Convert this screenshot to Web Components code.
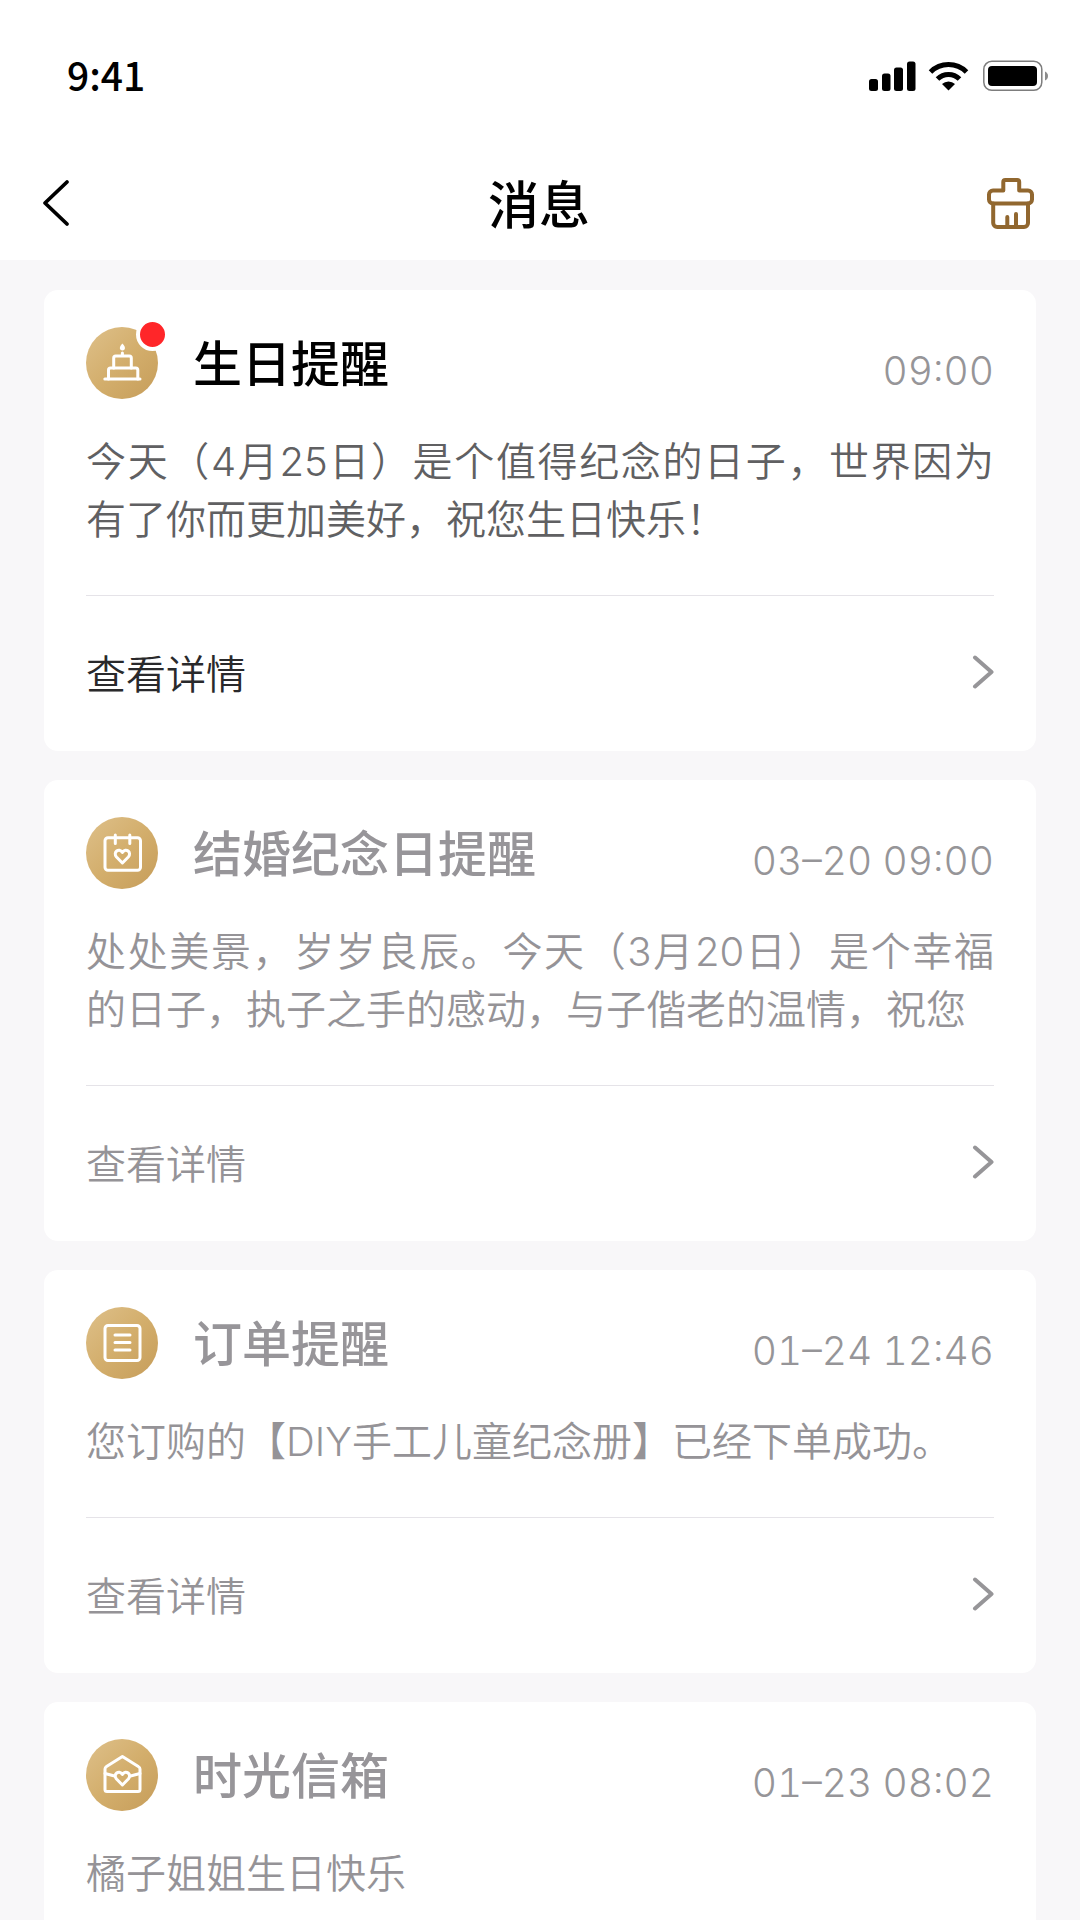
<!DOCTYPE html>
<html lang="zh-CN">
<head>
<meta charset="utf-8">
<meta name="viewport" content="width=device-width, initial-scale=1">
<title>消息</title>
<style>
  html, body { margin: 0; height: 100%; }
  body {
    background: #f8f7f9;
    color: #000;
    font-family: "Noto Sans CJK SC", sans-serif;
  }
</style>
</head>
<body>
<message-app>
  <status-bar slot="top">9:41</status-bar>
  <nav-bar slot="top">消息</nav-bar>
  <message-card unread icon="cake" time="09:00" href="#birthday">
    <span slot="title">生日提醒</span>
    今天（4月25日）是个值得纪念的日子，世界因为有了你而更加美好，祝您生日快乐！
  </message-card>
  <message-card icon="calendar" time="03–20 09:00" href="#anniversary">
    <span slot="title">结婚纪念日提醒</span>
    处处美景，岁岁良辰。今天（3月20日）是个幸福的日子，执子之手的感动，与子偕老的温情，祝您
  </message-card>
  <message-card icon="order" time="01–24 12:46" href="#order">
    <span slot="title">订单提醒</span>
    您订购的【DIY手工儿童纪念册】已经下单成功。
  </message-card>
  <message-card icon="mail" time="01–23 08:02">
    <span slot="title">时光信箱</span>
    橘子姐姐生日快乐
  </message-card>
</message-app>

<script>
const attach = (el, html) => { el.attachShadow({ mode: "open" }).innerHTML = html; };

customElements.define("message-app", class extends HTMLElement {
  constructor() {
    super();
    attach(this, `
      <style>
        :host { display: flex; flex-direction: column; height: 100vh; }
        header { flex: none; background: #fff; }
        main {
          flex: 1; min-height: 0; overflow-y: auto; scrollbar-width: none;
          display: flex; flex-direction: column; gap: 29px;
          padding: 30px 44px; box-sizing: border-box;
        }
      </style>
      <header><slot name="top"></slot></header>
      <main><slot></slot></main>`);
  }
});

customElements.define("status-bar", class extends HTMLElement {
  constructor() {
    super();
    attach(this, `
      <style>
        :host {
          display: flex; align-items: center; justify-content: space-between;
          height: 152px; padding: 0 32px 0 67px;
          font-size: 39px; font-weight: 500; line-height: 60px;
        }
        span { padding-bottom: 4px; }
        svg { display: block; }
      </style>
      <span><slot></slot></span>
      <svg width="179" height="32" viewBox="0 0 179 32" aria-hidden="true">
        <rect x="0" y="19" width="9" height="12" rx="2.5"/>
        <rect x="13" y="13.5" width="8.5" height="17.5" rx="2.5"/>
        <rect x="25" y="7.5" width="9" height="23.5" rx="2.5"/>
        <rect x="38" y="1.5" width="8.5" height="29.5" rx="2.5"/>
        <g fill="none" stroke="#000" stroke-width="5">
          <path d="M61.5 12A25.5 25.5 0 0 1 97.5 12"/>
          <path d="M68.5 19A15.5 15.5 0 0 1 90.5 19"/>
        </g>
        <path d="M79.5 30.5L73 24A9.5 9.5 0 0 1 86 24Z"/>
        <rect x="114.8" y="1.3" width="58" height="29" rx="8" fill="none" stroke="#7d7d7d" stroke-width="1.5"/>
        <rect x="119" y="6" width="49" height="20" rx="4"/>
        <path d="M176 11.5Q179 13 179 16T176 20.5Z" fill="#8c8c8c"/>
      </svg>`);
  }
});

customElements.define("nav-bar", class extends HTMLElement {
  constructor() {
    super();
    attach(this, `
      <style>
        :host {
          display: flex; align-items: center; justify-content: space-between;
          height: 102px; padding: 0 44px 6px 42px;
        }
        h1 { margin: 0; padding-bottom: 2px; font-size: 51px; font-weight: 500; line-height: 72px; }
        button {
          display: flex; align-items: center; width: 64px; height: 64px;
          margin: 0; padding: 0; border: 0; background: none; cursor: pointer;
        }
        .clear { justify-content: flex-end; }
        svg { display: block; fill: none; stroke-linecap: round; stroke-linejoin: round; }
      </style>
      <button class="back" type="button" aria-label="返回">
        <svg width="28" height="48" viewBox="0 0 28 48" stroke="#000" stroke-width="3.8"><path d="M25 3L3 24L25 45"/></svg>
      </button>
      <h1><slot></slot></h1>
      <button class="clear" type="button" aria-label="清除未读">
        <svg width="50" height="53" viewBox="0 0 50 53" stroke="#91672f" stroke-width="4">
          <path d="M17.3 13.5V5a2 2 0 0 1 2-2H31.2a2 2 0 0 1 2 2V13.5H42a4 4 0 0 1 4 4V22.5a4 4 0 0 1-4 4H7a4 4 0 0 1-4-4V17.5a4 4 0 0 1 4-4Z"/>
          <path d="M7.2 26.5V46a4 4 0 0 0 4 4H38a4 4 0 0 0 4-4V26.5"/>
          <path d="M21.3 40V49M30 37V49"/>
        </svg>
      </button>`);
  }
});

const HEART = "M36.4 46L30.5 40C26.5 35.5 33 30 36.4 35.5C39.8 30 46.3 35.5 42.3 40Z";
const ICONS = {
  cake: `<path d="M18.8 52H54"/>
    <path d="M22.5 52V43a2 2 0 0 1 2-2H49.8a2 2 0 0 1 2 2V52"/>
    <path d="M27.7 41V31a2 2 0 0 1 2-2H43.3a2 2 0 0 1 2 2V41M36.4 29V26"/>
    <path d="M36.4 16.5C40.5 20.5 39 23.5 36.4 23.5S32.3 20.5 36.4 16.5Z" fill="#fff" stroke="none"/>`,
  calendar: `<rect x="19" y="20.8" width="35.5" height="32.5" rx="3"/>
    <path d="M29.3 18V26.5M43.8 18V26.5"/>
    <path d="${HEART}"/>`,
  order: `<rect x="19" y="18.5" width="35" height="35" rx="3"/>
    <path d="M29 28H44M29 35.5H44M29 43H44"/>`,
  mail: `<path d="M20.5 27.5L36.4 17.5L52.3 27.5Q54 28.5 54 30V50.5a2 2 0 0 1-2 2H21a2 2 0 0 1-2-2V30Q19 28.5 20.5 27.5Z"/>
    <path d="M19 34.5L28.5 37M54 34.5L44.5 37"/>
    <path d="${HEART}"/>`
};

customElements.define("message-icon", class extends HTMLElement {
  connectedCallback() {
    if (this.shadowRoot) return;
    attach(this, `
      <style>
        :host {
          display: block; position: relative; flex: none; width: 72px; height: 72px; border-radius: 50%;
          background: linear-gradient(135deg, #dec08a, #d3ae6c 50%, #c69d5a);
        }
        svg { display: block; fill: none; stroke: #fff; stroke-width: 3px; stroke-linecap: round; stroke-linejoin: round; }
        i {
          display: none; position: absolute; top: -9px; right: -11px;
          width: 25px; height: 25px; border: 4px solid #fff; border-radius: 50%; background: #ff2629;
        }
        :host([badge]) i { display: block; }
      </style>
      <svg width="72" height="72" viewBox="0 0 72 72" aria-hidden="true">${ICONS[this.getAttribute("name")]}</svg>
      <i></i>`);
  }
});

customElements.define("message-card", class extends HTMLElement {
  connectedCallback() {
    if (this.shadowRoot) return;
    const badge = this.hasAttribute("unread") ? "badge" : "";
    const href = this.getAttribute("href");
    attach(this, `
      <style>
        :host {
          --title: #979599; --text: #959397; --action: #959397;
          display: block; flex: none; padding: 37px 42px 0;
          border-radius: 14px; background: #fff;
        }
        :host([unread]) { --title: #000; --text: #606062; --action: #29292b; }
        header { display: flex; align-items: center; height: 72px; }
        h2 { flex: 1; margin: 0 0 0 35px; padding-bottom: 4px; font-size: 49px; font-weight: 500; line-height: 68px; color: var(--title); }
        time, p { font-family: Inter, "Noto Sans CJK SC", sans-serif; font-size: 40px; font-weight: 350; line-height: 58px; }
        time { padding-top: 16px; font-size: 39px; font-variant-numeric: tabular-nums; color: #969598; }
        p { margin: 34px 0 46px; color: var(--text); text-align: justify; }
        a {
          display: flex; align-items: center; justify-content: space-between;
          height: 151px; padding-bottom: 4px; border-top: 1px solid #e5e3e8;
          font-size: 40px; font-weight: 350; color: var(--action); text-decoration: none;
        }
        a svg { display: block; fill: none; stroke: #969598; stroke-width: 4px; stroke-linecap: round; stroke-linejoin: round; }
      </style>
      <header>
        <message-icon name="${this.getAttribute("icon")}" ${badge}></message-icon>
        <h2><slot name="title"></slot></h2>
        <time>${this.getAttribute("time")}</time>
      </header>
      <p><slot></slot></p>
      ${href ? `<a href="${href}">查看详情
        <svg width="22" height="34" viewBox="0 0 22 34" aria-hidden="true"><path d="M3 2.5L19.5 17L3 31.5"/></svg>
      </a>` : ""}`);
  }
});
</script>
</body>
</html>
